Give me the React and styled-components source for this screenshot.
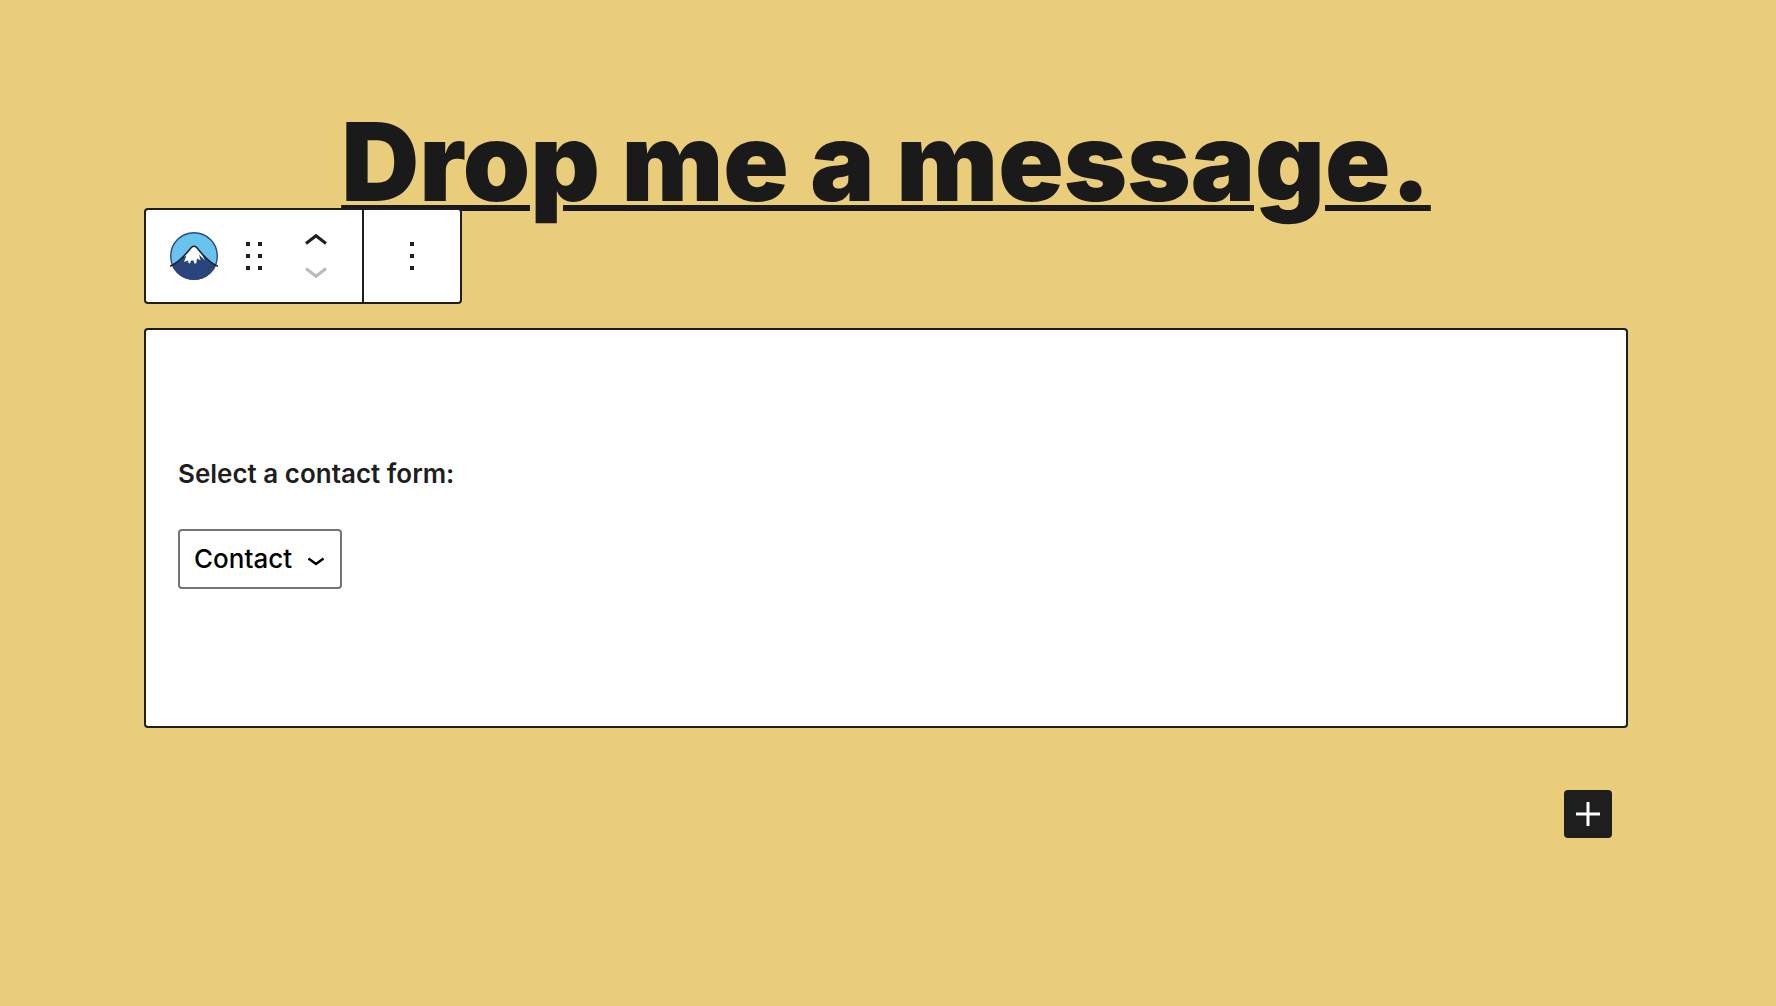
import React, { useState } from "react";
import styled, { createGlobalStyle } from "styled-components";

const ink = "#1e1e1e";

const GlobalStyle = createGlobalStyle`
  *, *::before, *::after { box-sizing: border-box; }
  body {
    margin: 0;
    background: #e9cd7a;
    color: ${ink};
    font-family: Inter, "Liberation Sans", sans-serif;
  }
`;

const Page = styled.main`
  display: flex;
  flex-direction: column;
  min-height: 100vh;
  padding: 122px 148px 64px 144px;
`;

const Heading = styled.h1`
  margin: 0 0 6px;
  color: #1a1a1a;
  font-size: 108px;
  font-weight: 900;
  line-height: 80px;
  text-align: center;
  white-space: nowrap;
  text-decoration: underline;
  text-decoration-thickness: 6px;
  text-underline-offset: 4px;
`;

const Toolbar = styled.div`
  position: relative;
  display: flex;
  align-self: flex-start;
  height: 96px;
  margin-bottom: 24px;
  background: #fff;
  border: 2px solid ${ink};
  border-radius: 4px;
`;

const ToolbarGroup = styled.div`
  display: flex;
  align-items: center;
  padding: ${({ $padding }) => $padding};

  & + & {
    border-left: 2px solid ${ink};
  }
`;

const ToolButton = styled.button`
  display: flex;
  align-items: center;
  justify-content: center;
  width: ${({ $width }) => $width}px;
  height: ${({ $height }) => $height || 48}px;
  padding: 0;
  border: 0;
  background: transparent;
  color: ${ink};
  cursor: pointer;

  &:disabled {
    color: #bbb;
    cursor: default;
  }
`;

const Movers = styled.div`
  display: flex;
  flex-direction: column;
  gap: 2px;
`;

const Block = styled.section`
  display: flex;
  flex-direction: column;
  align-items: flex-start;
  gap: 37px;
  padding: 125px 32px 137px;
  background: #fff;
  border: 2px solid ${ink};
  border-radius: 4px;
`;

const Label = styled.label`
  font-size: 26px;
  font-weight: 600;
  line-height: 37px;
`;

const SelectWrap = styled.div`
  position: relative;
  display: flex;
`;

const Select = styled.select`
  appearance: none;
  height: 60px;
  padding: 0 47px 2px 14px;
  background: #fff;
  border: 2px solid #757575;
  border-radius: 4px;
  color: #000;
  font-family: inherit;
  font-size: 26px;
  font-weight: 500;
`;

const SelectArrow = styled.svg`
  position: absolute;
  right: 17px;
  top: 26px;
  pointer-events: none;
`;

const AddButton = styled.button`
  display: flex;
  align-items: center;
  justify-content: center;
  align-self: flex-end;
  width: 48px;
  height: 48px;
  margin: 62px 16px 0 0;
  padding: 0;
  border: 0;
  border-radius: 4px;
  background: ${ink};
  color: #fff;
  cursor: pointer;
`;

function MountainIcon() {
  return (
    <svg width="48" height="48" viewBox="0 0 48 48" aria-hidden="true">
      <defs>
        <clipPath id="badge">
          <circle cx="24" cy="24" r="24" />
        </clipPath>
      </defs>
      <circle cx="24" cy="24" r="23.3" fill="#69c3ef" stroke="#2a4a86" strokeWidth="1.4" />
      <g clipPath="url(#badge)">
        <path d="M0 34.5C7 31 15 23.5 21 15.5Q24 13 27 15.5C33 23.5 40 31 48 34.5V48H0Z" fill="#29457c" />
      </g>
      <path
        d="M21.5 15Q24 13.5 26.5 15L31 21L35 28.500L31.500 25L29 22.500L30.500 28.200L27 26.500L26.200 31.500L24.500 31.500L23.500 28.500L21 28.500L20 31.500L18.500 31L18 28.500L14 30L16.500 23.500L13.500 25Z"
        fill="#fff"
      />
      <path
        d="M.6 34C7 31 15 23.5 21.5 15.3Q24 13.3 26.5 15.3C33 23.5 40 31 47.4 34"
        fill="none"
        stroke="#1d2128"
        strokeWidth="1.5"
        strokeLinecap="round"
      />
    </svg>
  );
}

function Dots({ columns }) {
  const width = columns * 12 - 8;
  return (
    <svg width={width} height="28" viewBox={`0 0 ${width} 28`} fill="currentColor" aria-hidden="true">
      {Array.from({ length: columns }, (_, c) =>
        [0, 12, 24].map((y) => <rect key={`${c}-${y}`} x={c * 12} y={y} width="4" height="4" />)
      )}
    </svg>
  );
}

function MoveArrow({ down }) {
  return (
    <svg width="22" height="12" viewBox="0 0 22 12" fill="none" stroke="currentColor" strokeWidth="3" aria-hidden="true">
      <path d={down ? "M1 1.5L11 9.3L21 1.5" : "M1 10.5L11 2.7L21 10.5"} />
    </svg>
  );
}

export default function App() {
  const [form, setForm] = useState("contact");
  return (
    <>
      <GlobalStyle />
      <Page>
        <Heading>Drop me a message.</Heading>
        <Toolbar role="toolbar" aria-label="Block tools">
          <ToolbarGroup $padding="0 20px 0 24px">
            <ToolButton type="button" $width={48} aria-label="Contact form block">
              <MountainIcon />
            </ToolButton>
            <ToolButton type="button" $width={72} aria-label="Drag">
              <Dots columns={2} />
            </ToolButton>
            <Movers>
              <ToolButton type="button" $width={52} $height={32} aria-label="Move up">
                <MoveArrow />
              </ToolButton>
              <ToolButton type="button" $width={52} $height={32} aria-label="Move down" disabled>
                <MoveArrow down />
              </ToolButton>
            </Movers>
          </ToolbarGroup>
          <ToolbarGroup $padding="0 24px">
            <ToolButton type="button" $width={48} aria-label="Options">
              <Dots columns={1} />
            </ToolButton>
          </ToolbarGroup>
        </Toolbar>
        <Block>
          <Label htmlFor="contact-form">Select a contact form:</Label>
          <SelectWrap>
            <Select id="contact-form" value={form} onChange={(e) => setForm(e.target.value)}>
              <option value="contact">Contact</option>
            </Select>
            <SelectArrow width="18" height="12" viewBox="0 0 18 12" fill="none" stroke="#000" strokeWidth="2.4" aria-hidden="true">
              <path d="M1.5 3.5L9 9L16.5 3.5" />
            </SelectArrow>
          </SelectWrap>
        </Block>
        <AddButton type="button" aria-label="Add block">
          <svg width="24" height="24" viewBox="0 0 24 24" stroke="currentColor" strokeWidth="3" aria-hidden="true">
            <path d="M12 0V24M0 12H24" />
          </svg>
        </AddButton>
      </Page>
    </>
  );
}
